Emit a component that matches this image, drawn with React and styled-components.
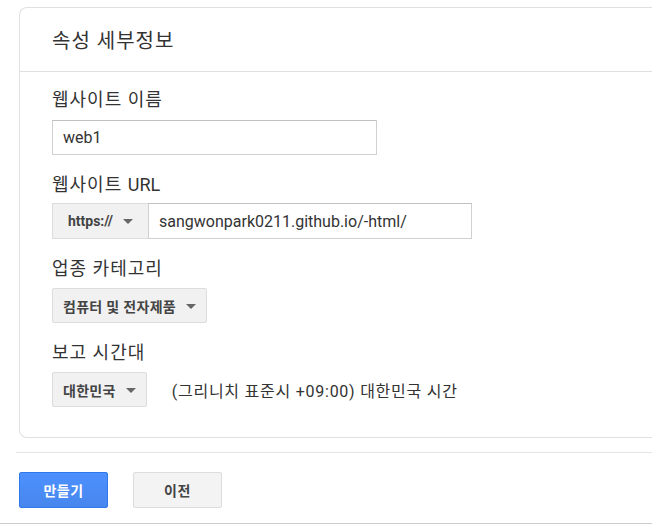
import React from 'react';
import styled, { createGlobalStyle } from 'styled-components';

const GlobalStyle = createGlobalStyle`
  html, body {
    margin: 0;
    padding: 0;
    background: #ffffff;
    overflow: hidden;
  }
  body {
    font-family: Roboto, "Noto Sans CJK KR", sans-serif;
    color: #333;
  }
`;

const Page = styled.div`
  width: 652px;
  height: 526px;
  padding-top: 7px;
  box-sizing: border-box;
  overflow: hidden;
`;

const Card = styled.section`
  margin-left: 19px;
  width: 700px;
  border: 1px solid #e0e0e0;
  border-right: none;
  border-radius: 8px 0 0 8px;
  box-sizing: border-box;
`;

const CardHeader = styled.div`
  height: 63px;
  display: flex;
  align-items: center;
  padding-left: 32px;
  border-bottom: 1px solid #e0e0e0;
  font-size: 20px;
  letter-spacing: 1px;
  color: #333;
`;

const CardBody = styled.div`
  padding: 16px 0 30px 32px;
  display: flex;
  flex-direction: column;
  gap: 18px;
`;

const Field = styled.div`
  display: flex;
  flex-direction: column;
  align-items: flex-start;
`;

const Label = styled.div`
  font-size: 18px;
  letter-spacing: 1px;
  line-height: 24px;
  color: #333;
  margin-bottom: ${p => p.$gap || 7}px;
`;

const Latin = styled.span`
  letter-spacing: 0;
`;

const TextInput = styled.div`
  width: ${p => p.$width}px;
  height: 35px;
  box-sizing: border-box;
  border: 1px solid #d0d0d0;
  border-top-color: #c0c0c0;
  padding: 0 10px;
  display: flex;
  align-items: center;
  font-size: 16px;
  color: #333;
  background: #fff;
`;

const UrlGroup = styled.div`
  display: flex;
  height: 36px;
`;

const Prefix = styled.div`
  width: 96px;
  box-sizing: border-box;
  border: 1px solid #dcdcdc;
  border-right: none;
  background: #f1f1f1;
  display: flex;
  align-items: center;
  justify-content: center;
  gap: 10px;
  font-size: 14px;
  font-weight: 700;
  color: #444;
`;

const UrlInput = styled(TextInput)`
  height: 36px;
  font-size: 16px;
`;

const Dropdown = styled.div`
  height: 35px;
  box-sizing: border-box;
  padding: 0 10px;
  border: 1px solid #dcdcdc;
  border-radius: 2px;
  background: #f1f1f1;
  display: flex;
  align-items: center;
  gap: 10px;
  font-size: 14px;
  font-weight: 700;
  letter-spacing: 0.3px;
  color: #444;
`;

const Caret = styled.span`
  width: 0;
  height: 0;
  border-left: 5px solid transparent;
  border-right: 5px solid transparent;
  border-top: 5px solid #666;
  margin-top: 1px;
`;

const ZoneRow = styled.div`
  display: flex;
  align-items: center;
  gap: 25px;
`;

const ZoneText = styled.span`
  font-size: 16px;
  letter-spacing: 0.75px;
  color: #333;
`;

const Footer = styled.div`
  margin-top: 14px;
  margin-left: 16px;
  border-top: 1px solid #e5e5e5;
  padding: 19px 0 15px 3px;
  display: flex;
  gap: 25px;
`;

const BottomRule = styled.div`
  border-bottom: 1px solid #cccccc;
`;

const Button = styled.button`
  width: 89px;
  height: 36px;
  box-sizing: border-box;
  border-radius: 2px;
  font-family: inherit;
  font-size: 14px;
  font-weight: 700;
  letter-spacing: 0.5px;
  cursor: pointer;
  border: 1px solid ${p => (p.$primary ? '#3079ed' : '#dcdcdc')};
  background: ${p =>
    p.$primary ? 'linear-gradient(#4d90fe, #4787ed)' : '#f3f3f3'};
  color: ${p => (p.$primary ? '#ffffff' : '#444')};
`;

export default function App() {
  return (
    <>
      <GlobalStyle />
      <Page>
        <Card>
          <CardHeader>속성 세부정보</CardHeader>
          <CardBody>
            <Field>
              <Label $gap={8}>웹사이트 이름</Label>
              <TextInput $width={325}>web1</TextInput>
            </Field>
            <Field>
              <Label $gap={6}>
                웹사이트 <Latin>URL</Latin>
              </Label>
              <UrlGroup>
                <Prefix>
                  https://
                  <Caret />
                </Prefix>
                <UrlInput $width={324}>sangwonpark0211.github.io/-html/</UrlInput>
              </UrlGroup>
            </Field>
            <Field>
              <Label>업종 카테고리</Label>
              <Dropdown>
                컴퓨터 및 전자제품
                <Caret />
              </Dropdown>
            </Field>
            <Field>
              <Label>보고 시간대</Label>
              <ZoneRow>
                <Dropdown>
                  대한민국
                  <Caret />
                </Dropdown>
                <ZoneText>(그리니치 표준시 +09:00) 대한민국 시간</ZoneText>
              </ZoneRow>
            </Field>
          </CardBody>
        </Card>
        <Footer>
          <Button $primary>만들기</Button>
          <Button>이전</Button>
        </Footer>
        <BottomRule />
      </Page>
    </>
  );
}
